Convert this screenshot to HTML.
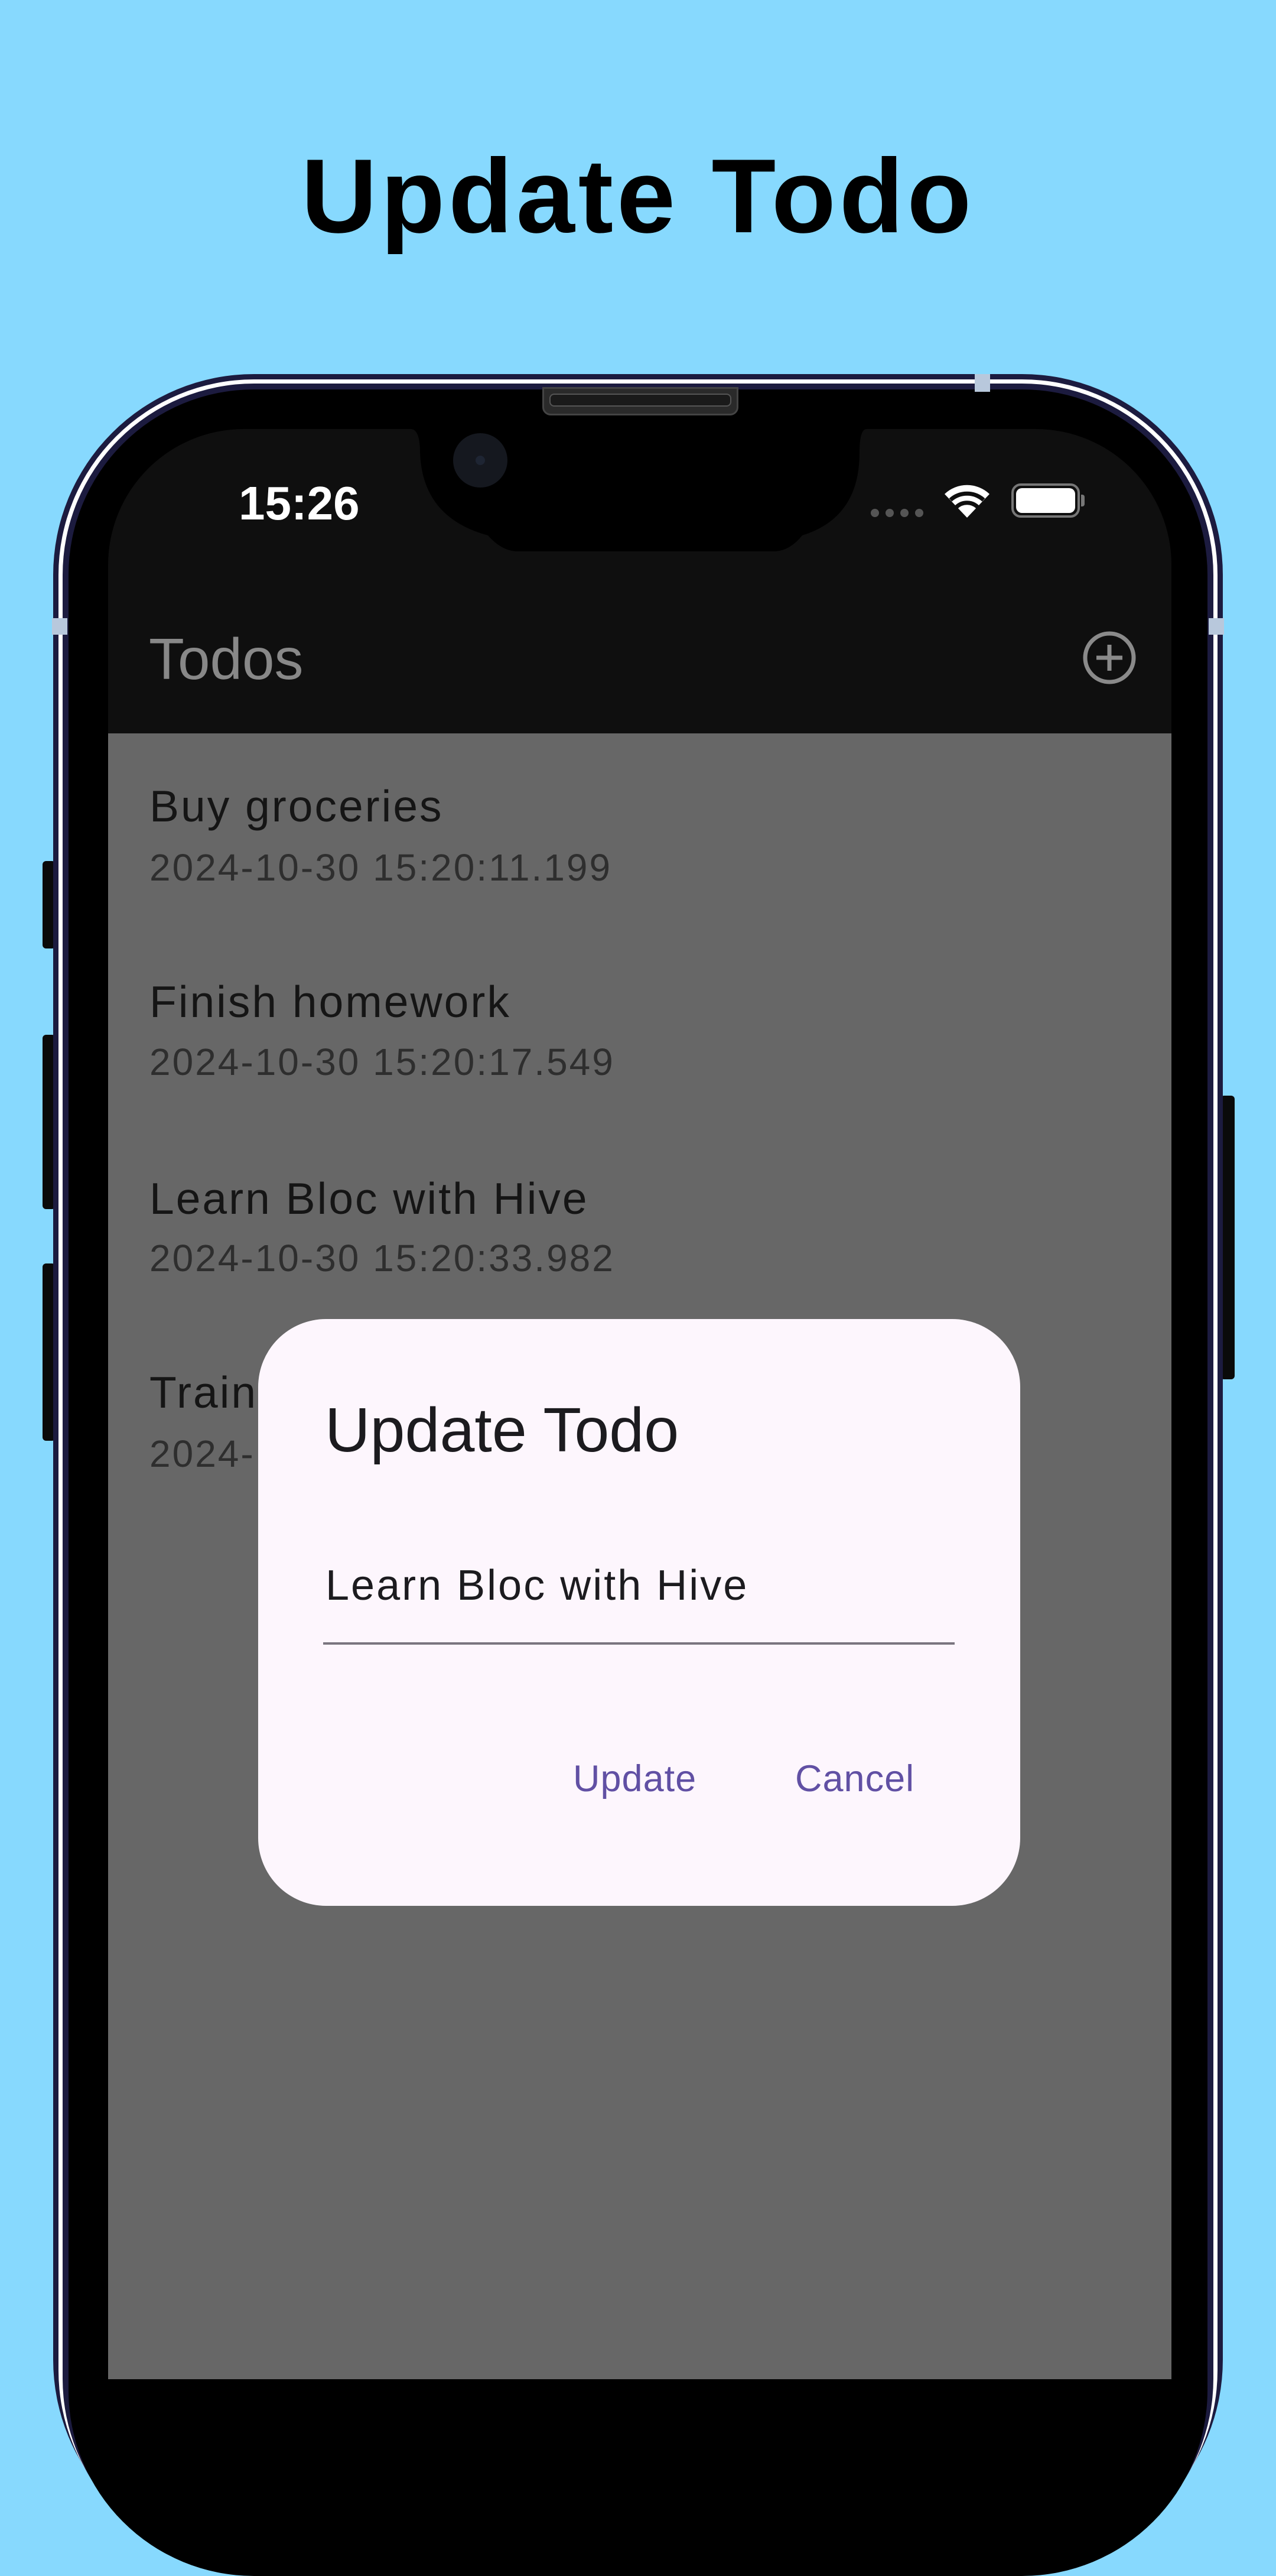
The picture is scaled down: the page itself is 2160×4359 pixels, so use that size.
<!DOCTYPE html>
<html><head><meta charset="utf-8"><style>
*{margin:0;padding:0;box-sizing:border-box}
html,body{width:2160px;height:3840px;overflow:hidden;background:#87d9fe;font-family:"Liberation Sans",sans-serif}
.abs{position:absolute}
#title{left:0;width:2160px;top:232px;text-align:center;font-weight:bold;font-size:178px;letter-spacing:6px;color:#000;line-height:200px}
.phone{left:90px;top:633px;width:1980px;height:3700px;border-radius:340px;background:#1c1b3f}
.ring1{left:99px;top:642px;width:1962px;height:3700px;border-radius:331px;background:#fff}
.ring2{left:106px;top:649px;width:1948px;height:3700px;border-radius:324px;background:#1c1b3f}
.body{left:116px;top:659px;width:1928px;height:3700px;border-radius:314px;background:#000}
.screen{left:183px;top:726px;width:1800px;height:3300px;border-radius:230px 230px 0 0;background:#0f0f0f;overflow:hidden}
.list{left:0;top:515px;width:1800px;height:3000px;background:#676767}
.t{position:absolute;left:70px;font-size:75px;color:#151515;letter-spacing:3px;white-space:nowrap}
.d{position:absolute;left:70px;font-size:64px;color:#2e2e2e;letter-spacing:3px;white-space:nowrap}
.btn{background:#0a0a0a;border-radius:6px}
</style></head><body>
<div id="title" class="abs">Update Todo</div>

<!-- side buttons -->
<div class="abs btn" style="left:72px;top:1457px;width:22px;height:148px"></div>
<div class="abs btn" style="left:72px;top:1751px;width:22px;height:295px"></div>
<div class="abs btn" style="left:72px;top:2138px;width:22px;height:300px"></div>
<div class="abs btn" style="left:2066px;top:1854px;width:24px;height:480px"></div>

<div class="abs phone"></div>
<div class="abs ring1"></div>
<div class="abs ring2"></div>
<div class="abs body"></div>
<!-- antenna bands -->
<div class="abs" style="left:1650px;top:633px;width:26px;height:30px;background:#b8c8dc"></div>
<div class="abs" style="left:88px;top:1046px;width:26px;height:28px;background:#b8c8dc"></div>
<div class="abs" style="left:2046px;top:1046px;width:26px;height:28px;background:#b8c8dc"></div>
<!-- speaker -->
<div class="abs" style="left:918px;top:655px;width:332px;height:48px;border-radius:0 0 14px 14px;background:#2a2a2a;border:3px solid #444"></div>
<div class="abs" style="left:930px;top:666px;width:308px;height:22px;border-radius:8px;background:#1a1a1a;border:2px solid #555"></div>

<div class="abs screen">
  <!-- notch -->
  <svg class="abs" style="left:0;top:0" width="1800" height="230">
    <path d="M512 0 L1284 0 Q1272 0 1272 40 Q1272 150 1175 180 Q1155 205 1130 207 L690 207 Q665 205 643 180 Q532 150 528 40 Q528 0 512 0 Z" fill="#000"/>
    <circle cx="630" cy="53" r="46" fill="#15181f"/>
    <circle cx="630" cy="53" r="8" fill="#1e2533"/>
  </svg>
  <div class="abs" style="left:221px;top:86px;font-size:80px;font-weight:bold;color:#fff;line-height:80px">15:26</div>
  <!-- signal dots -->
  <div class="abs" style="left:1291px;top:135px;width:90px;height:14px">
    <div class="abs" style="left:0;width:14px;height:14px;border-radius:7px;background:#555"></div>
    <div class="abs" style="left:25px;width:14px;height:14px;border-radius:7px;background:#555"></div>
    <div class="abs" style="left:50px;width:14px;height:14px;border-radius:7px;background:#555"></div>
    <div class="abs" style="left:75px;width:14px;height:14px;border-radius:7px;background:#555"></div>
  </div>
  <svg class="abs" style="left:1412px;top:90px" width="84" height="62" viewBox="0 0 84 62">
    <path d="M42 60 L4 20 A55 55 0 0 1 80 20 Z" fill="#fff"/>
    <path d="M14 30 A42 42 0 0 1 70 30" stroke="#0f0f0f" stroke-width="7" fill="none"/>
    <path d="M24 42 A26 26 0 0 1 60 42" stroke="#0f0f0f" stroke-width="7" fill="none"/>
  </svg>
  <div class="abs" style="left:1529px;top:92px;width:116px;height:58px;border-radius:16px;border:4px solid #777"></div>
  <div class="abs" style="left:1537px;top:100px;width:100px;height:42px;border-radius:10px;background:#fff"></div>
  <div class="abs" style="left:1647px;top:111px;width:6px;height:20px;border-radius:0 4px 4px 0;background:#777"></div>

  <div class="abs" style="left:69px;top:334px;font-size:98px;color:#888;line-height:110px">Todos</div>
  <svg class="abs" style="left:1648px;top:340px" width="94" height="94" viewBox="0 0 94 94">
    <circle cx="47" cy="47" r="41" stroke="#8a8a8a" stroke-width="7" fill="none"/>
    <path d="M47 25 V69 M25 47 H69" stroke="#8a8a8a" stroke-width="7"/>
  </svg>

  <div class="abs list">
    <div class="t" style="top:80px">Buy groceries</div>
    <div class="d" style="top:190px">2024-10-30 15:20:11.199</div>
    <div class="t" style="top:411px">Finish homework</div>
    <div class="d" style="top:519px">2024-10-30 15:20:17.549</div>
    <div class="t" style="top:744px">Learn Bloc with Hive</div>
    <div class="d" style="top:851px">2024-10-30 15:20:33.982</div>
    <div class="t" style="top:1072px">Train</div>
    <div class="d" style="top:1182px">2024-</div>
  </div>
</div>

<!-- dialog -->
<div class="abs" style="left:437px;top:2232px;width:1290px;height:993px;border-radius:115px;background:#fdf6fd">
  <div class="abs" style="left:113px;top:128px;font-size:106px;color:#1c1b1f;line-height:120px;white-space:nowrap">Update Todo</div>
  <div class="abs" style="left:114px;top:406px;font-size:72px;color:#1c1b1f;letter-spacing:3px;line-height:90px;white-space:nowrap">Learn Bloc with Hive</div>
  <div class="abs" style="left:110px;top:547px;width:1069px;height:4px;background:#7a757f"></div>
  <div class="abs" style="left:533px;top:738px;font-size:63px;color:#6150a4;letter-spacing:1px;line-height:80px">Update</div>
  <div class="abs" style="left:909px;top:738px;font-size:63px;color:#6150a4;letter-spacing:1px;line-height:80px">Cancel</div>
</div>
</body></html>
